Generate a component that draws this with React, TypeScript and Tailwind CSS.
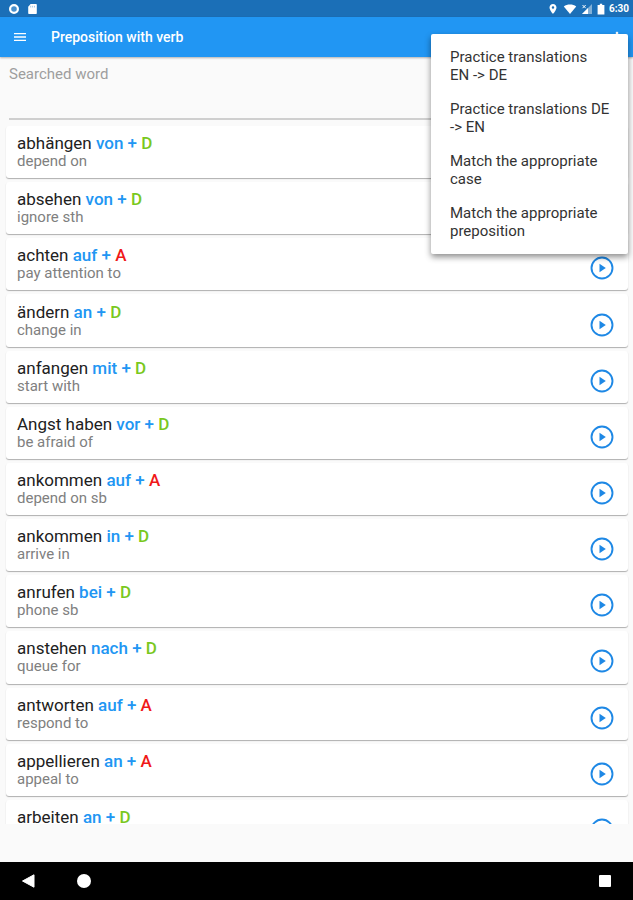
import { MdMenu, MdMoreVert, MdPlace } from "react-icons/md";

type Verb = {
  verb: string;
  preposition: string;
  grammarCase: "A" | "D";
  translation: string;
};

const verbs: Verb[] = [
  { verb: "abhängen", preposition: "von", grammarCase: "D", translation: "depend on" },
  { verb: "absehen", preposition: "von", grammarCase: "D", translation: "ignore sth" },
  { verb: "achten", preposition: "auf", grammarCase: "A", translation: "pay attention to" },
  { verb: "ändern", preposition: "an", grammarCase: "D", translation: "change in" },
  { verb: "anfangen", preposition: "mit", grammarCase: "D", translation: "start with" },
  { verb: "Angst haben", preposition: "vor", grammarCase: "D", translation: "be afraid of" },
  { verb: "ankommen", preposition: "auf", grammarCase: "A", translation: "depend on sb" },
  { verb: "ankommen", preposition: "in", grammarCase: "D", translation: "arrive in" },
  { verb: "anrufen", preposition: "bei", grammarCase: "D", translation: "phone sb" },
  { verb: "anstehen", preposition: "nach", grammarCase: "D", translation: "queue for" },
  { verb: "antworten", preposition: "auf", grammarCase: "A", translation: "respond to" },
  { verb: "appellieren", preposition: "an", grammarCase: "A", translation: "appeal to" },
  { verb: "arbeiten", preposition: "an", grammarCase: "D", translation: "" },
];

// the no-break space keeps "EN ->" on one line
const menuItems = [
  "Practice translations EN\u00a0-> DE",
  "Practice translations DE -> EN",
  "Match the appropriate case",
  "Match the appropriate preposition",
];

function StatusBar() {
  return (
    <div className="flex h-[17px] shrink-0 items-center bg-[#1b6fb7] pr-1 pl-2 text-white">
      <svg viewBox="0 0 12 12" className="size-3">
        <circle cx="6" cy="6" r="3.9" fill="#4a90cc" stroke="white" strokeWidth="2.2" />
      </svg>
      <svg viewBox="0 0 12 12" className="ml-1.5 size-3">
        <path d="M4.6 1H10a.8.8 0 0 1 .8.8v8.4a.8.8 0 0 1-.8.8H3a.8.8 0 0 1-.8-.8V3.8z" fill="white" />
        <path d="M4.7 2.8v1.7M6.6 2.8v1.7M8.5 2.8v1.7" stroke="#8fbbe0" strokeWidth=".8" />
      </svg>
      <div className="ml-auto flex items-center">
        <MdPlace className="size-3" />
        <svg viewBox="0 0 14 12" className="ml-1 h-3 w-3.5">
          <path d="M7 11 .8 3.4C4.2.9 9.8.9 13.2 3.4z" fill="white" />
        </svg>
        <svg viewBox="0 0 12 12" className="ml-1 size-3">
          <path d="M11 1v10H1z" fill="white" fillOpacity=".45" />
          <path d="M7 5v6H1z" fill="white" />
          <path d="m1.5 2 3.2 3.2M4.7 2 1.5 5.200" stroke="white" strokeWidth="1" />
        </svg>
        <svg viewBox="0 0 8 12" className="ml-1 h-3 w-2">
          <path d="M2.8.8h2.4V2h2.2v9.400H.6V2h2.2z" fill="white" />
        </svg>
        <span className="ml-1 text-[10px] leading-none font-bold">6:30</span>
      </div>
    </div>
  );
}

function OptionsMenu() {
  return (
    <div
      role="menu"
      className="absolute top-[17px] right-[5px] z-10 w-[197px] rounded-[2px] bg-white py-1.5 shadow-[0_3px_6px_rgba(0,0,0,0.45)]"
    >
      {menuItems.map((item) => (
        <button
          key={item}
          role="menuitem"
          className="block w-full py-2 pr-4 pl-[19px] text-left text-[15px] leading-[18px] text-[#333]"
        >
          {item}
        </button>
      ))}
    </div>
  );
}

function AppBar() {
  return (
    <header className="relative flex h-10 shrink-0 items-center bg-[#2196f3] pl-3 text-white shadow-[0_1px_2px_rgba(0,0,0,0.3)]">
      <button aria-label="Open navigation">
        <MdMenu className="size-4" />
      </button>
      <h1 className="ml-[23px] text-sm font-medium">Preposition with verb</h1>
      <button aria-label="More options" className="mr-2 ml-auto">
        <MdMoreVert className="size-4" />
      </button>
      <OptionsMenu />
    </header>
  );
}

function PlayIcon() {
  return (
    <svg viewBox="0 0 24 24" className="size-6">
      <circle cx="12" cy="12" r="10.5" fill="none" stroke="#1e88e5" strokeWidth="1.9" />
      <path d="M9.5 7.8v8.400l6.300-4.200z" fill="#1e88e5" />
    </svg>
  );
}

function VerbCard({ verb, preposition, grammarCase, translation }: Verb) {
  return (
    <li className="mt-1 flex items-center rounded-[3px] bg-white pr-3.5 pl-[11px] shadow-[0_1px_1px_rgba(0,0,0,0.3)]">
      <div className="h-9">
        <p className="text-[17px] leading-[18px] text-[#212121]">
          {verb} <span className="font-medium text-[#2196f3]">{preposition} +</span>{" "}
          <span className={grammarCase === "A" ? "font-medium text-[#f01818]" : "font-medium text-[#7ac81e]"}>
            {grammarCase}
          </span>
        </p>
        <p className="text-[15px] leading-[18px] text-[#808080]">{translation}</p>
      </div>
      <button aria-label={`Play ${verb} ${preposition}`} className="mt-2 ml-auto">
        <PlayIcon />
      </button>
    </li>
  );
}

function NavigationBar() {
  return (
    <nav className="flex h-[38px] shrink-0 items-center bg-black px-5">
      <button aria-label="Back">
        <svg viewBox="0 0 16 16" className="size-4">
          <path d="M14 1.8v12.4L2.5 8z" fill="white" stroke="white" strokeLinejoin="round" />
        </svg>
      </button>
      <button aria-label="Home" className="ml-10">
        <svg viewBox="0 0 16 16" className="size-4">
          <circle cx="8" cy="8" r="7" fill="white" />
        </svg>
      </button>
      <button aria-label="Recent apps" className="ml-auto">
        <svg viewBox="0 0 16 16" className="size-4">
          <rect x="2" y="2" width="12" height="12" rx="1" fill="white" />
        </svg>
      </button>
    </nav>
  );
}

export default function App() {
  return (
    <div className="flex h-screen flex-col bg-[#fafafa] font-[Roboto,sans-serif]">
      <StatusBar />
      <AppBar />
      <main className="flex min-h-0 flex-1 flex-col pb-[38px]">
        <div className="mx-[9px] flex flex-col border-b-2 border-[#cfcfcf] pt-2">
          <label htmlFor="search" className="text-[15px] leading-[18px] text-[#9e9e9e]">
            Searched word
          </label>
          <input id="search" type="text" className="h-[35px] text-[17px] outline-none" />
        </div>
        <ul className="mt-0.5 grid min-h-0 flex-1 auto-rows-[max(56px,8%)] overflow-hidden pr-[5px] pl-[6px]">
          {verbs.map((v) => (
            <VerbCard key={`${v.verb}-${v.preposition}`} {...v} />
          ))}
        </ul>
      </main>
      <NavigationBar />
    </div>
  );
}
